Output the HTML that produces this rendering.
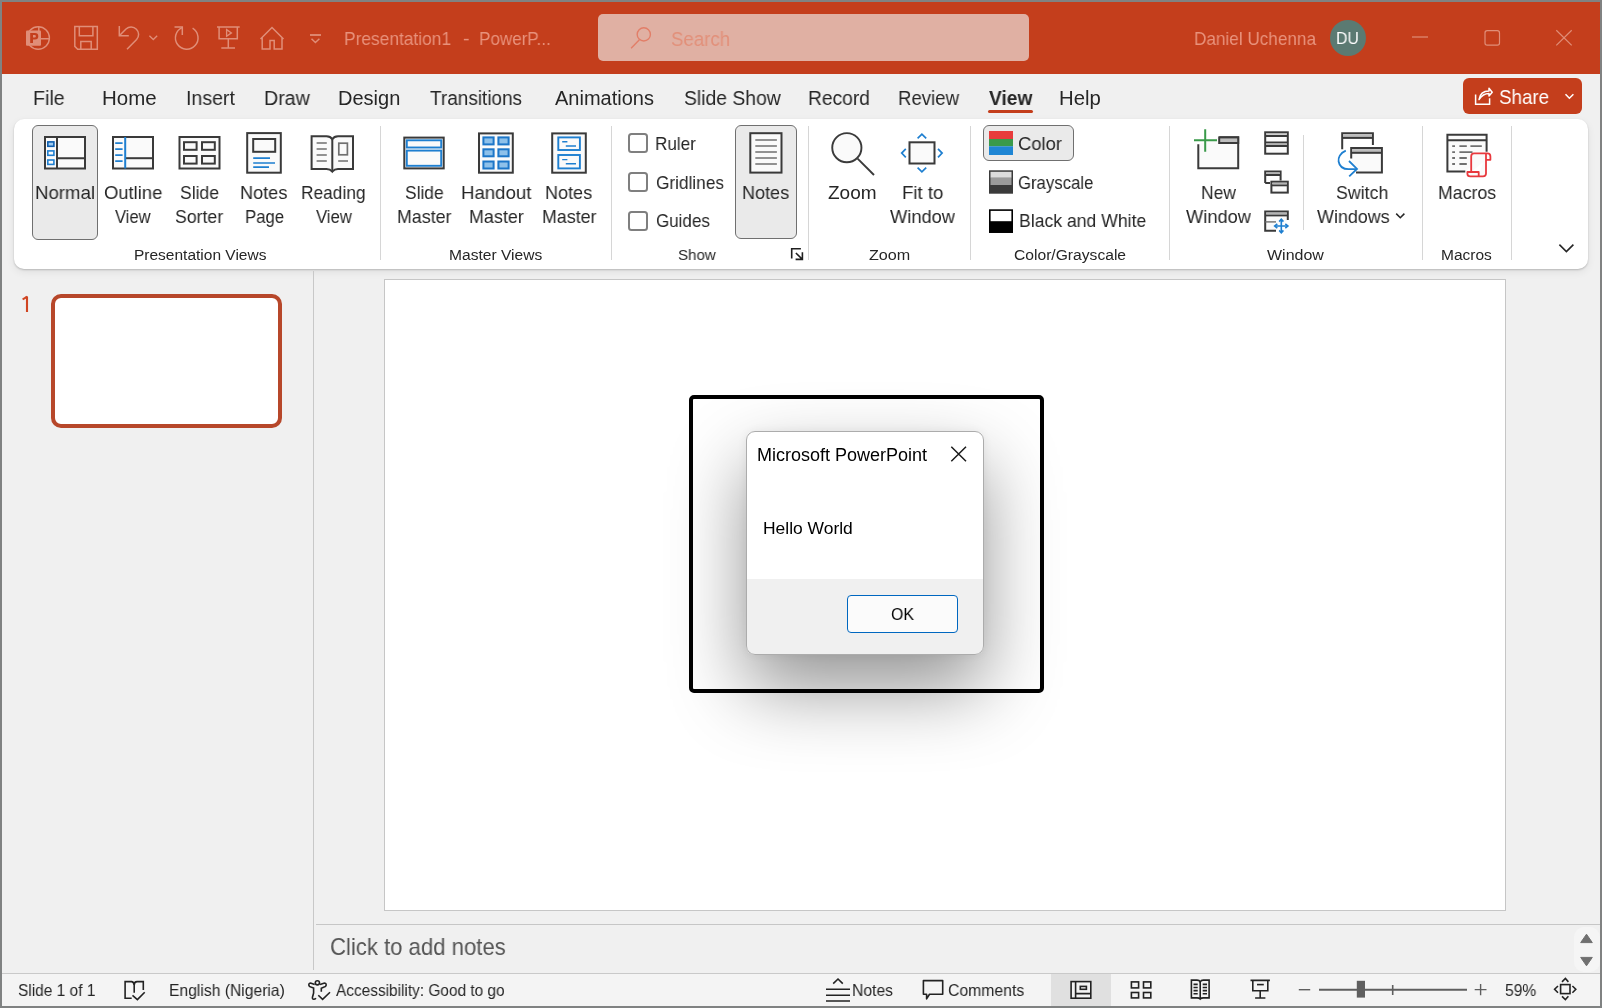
<!DOCTYPE html>
<html><head><meta charset="utf-8"><style>
*{margin:0;padding:0;box-sizing:border-box}
html,body{width:1602px;height:1008px;overflow:hidden;background:#808282;font-family:"Liberation Sans",sans-serif}
.t{position:absolute;line-height:1;white-space:nowrap;transform-origin:0 0;will-change:transform}
.b{position:absolute}
</style></head><body>
<div class="b" style="left:2px;top:2px;width:1598px;height:1004px;background:#f0f0f0"></div>
<div class="b" style="left:2px;top:2px;width:1598px;height:72px;background:#c43e1c"></div>
<div class="b" style="left:598px;top:14px;width:431px;height:47px;background:#e0b0a3;border-radius:5px"></div>
<div class="b" style="left:1463px;top:78px;width:119px;height:36px;background:#c43e1c;border-radius:6px"></div>
<div class="b" style="left:14px;top:119px;width:1574px;height:150px;background:#fff;border-radius:10px;box-shadow:0 1px 2px rgba(0,0,0,.2),0 3px 9px rgba(0,0,0,.07)"></div>
<div class="b" style="left:32px;top:125px;width:66px;height:115px;background:#eaeaea;border:1px solid #707070;border-radius:6px"></div>
<div class="b" style="left:735px;top:125px;width:62px;height:114px;background:#eaeaea;border:1px solid #707070;border-radius:6px"></div>
<div class="b" style="left:983px;top:125px;width:91px;height:36px;background:#eaeaea;border:1px solid #707070;border-radius:6px"></div>
<div class="b" style="left:380px;top:126px;width:1px;height:134px;background:#d6d6d6"></div>
<div class="b" style="left:611px;top:126px;width:1px;height:134px;background:#d6d6d6"></div>
<div class="b" style="left:808px;top:126px;width:1px;height:134px;background:#d6d6d6"></div>
<div class="b" style="left:970px;top:126px;width:1px;height:134px;background:#d6d6d6"></div>
<div class="b" style="left:1169px;top:126px;width:1px;height:134px;background:#d6d6d6"></div>
<div class="b" style="left:1422px;top:126px;width:1px;height:134px;background:#d6d6d6"></div>
<div class="b" style="left:1511px;top:126px;width:1px;height:134px;background:#d6d6d6"></div>
<div class="b" style="left:1303px;top:135px;width:1px;height:95px;background:#d6d6d6"></div>
<div class="b" style="left:628px;top:133px;width:20px;height:20px;border:2px solid #7f7f7f;border-radius:3.5px;background:#fff"></div>
<div class="b" style="left:628px;top:172px;width:20px;height:20px;border:2px solid #7f7f7f;border-radius:3.5px;background:#fff"></div>
<div class="b" style="left:628px;top:211px;width:20px;height:20px;border:2px solid #7f7f7f;border-radius:3.5px;background:#fff"></div>
<div class="b" style="left:313px;top:271px;width:1px;height:699px;background:#c8c8c8"></div>
<div class="b" style="left:51px;top:294px;width:231px;height:134px;background:#fff;border:4px solid #b7472a;border-radius:10px"></div>
<div class="b" style="left:384px;top:279px;width:1122px;height:632px;background:#fff;border:1px solid #c6c6c6"></div>
<div class="b" style="left:316px;top:924px;width:1284px;height:1px;background:#c6c6c6"></div>
<div class="b" style="left:1574px;top:927px;width:26px;height:45px;background:#f5f5f5;border-radius:10px"></div>
<div class="b" style="left:2px;top:973px;width:1598px;height:1px;background:#c9c9c9"></div>
<div class="b" style="left:2px;top:974px;width:1598px;height:32px;background:#f4f4f4"></div>
<div class="b" style="left:1051px;top:974px;width:60px;height:32px;background:#e0e0e0"></div>
<div class="b" style="left:746px;top:431px;width:238px;height:224px;border-radius:9px;box-shadow:0 34px 76px rgba(0,0,0,.42),0 0 10px rgba(0,0,0,.06)"></div>
<div class="b" style="left:689px;top:395px;width:355px;height:298px;border:4px solid #000;border-radius:5px"></div>
<div class="b" style="left:746px;top:431px;width:238px;height:224px;border-radius:9px;background:linear-gradient(#fff 0,#fff 147px,#f0f0f0 147px);border:1.5px solid #acacac"></div>
<div class="b" style="left:847px;top:595px;width:111px;height:38px;border:1px solid #0067c0;border-radius:4px;background:#fbfbfb"></div>
<div class="b" style="left:988px;top:110px;width:45px;height:3px;background:#c43e1c;border-radius:2px"></div>
<div class="b" style="left:1330px;top:20px;width:36px;height:36px;border-radius:50%;background:#5b7a72"></div>
<svg class="b" style="left:0;top:0" width="1602" height="1008" viewBox="0 0 1602 1008">
<g fill="#fafafa" stroke="#3a3a3a" stroke-width="2">
  <!-- Normal -->
  <rect x="45" y="137" width="40" height="31.5"/>
  <path d="M57 137V168.5 M57 158.2H85" fill="none"/>
  <!-- Outline -->
  <rect x="113" y="137" width="40" height="31.5"/>
  <path d="M126 158.2H153" fill="none"/>
  <!-- Sorter -->
  <rect x="179.5" y="137" width="40" height="31.5"/>
  <rect x="184" y="142.2" width="12.6" height="7.6"/>
  <rect x="202" y="142.2" width="12.8" height="7.6"/>
  <rect x="184" y="156" width="12.6" height="7.6"/>
  <rect x="202" y="156" width="12.8" height="7.6"/>
  <!-- Notes Page -->
  <rect x="247.2" y="133.1" width="33.6" height="39.6"/>
  <rect x="253.2" y="139" width="22" height="12.8"/>
  <!-- Reading View -->
  <path d="M311.6 136.2H326.5Q330.5 136.2 332.3 139.2Q334.1 136.2 338 136.2H353V169H338Q334.5 169 332.3 171.6Q330.1 169 326.5 169H311.6Z"/>
  <path d="M332.3 139.2V171" fill="none"/>
  <!-- Slide Master -->
  <rect x="404.3" y="137.6" width="39.4" height="30.8"/>
  <!-- Handout Master -->
  <rect x="479" y="133.4" width="33.8" height="39.3"/>
  <!-- Notes Master -->
  <rect x="552.2" y="133.4" width="33.6" height="39.3"/>
  <!-- Notes button -->
  <rect x="750.3" y="133.2" width="31.2" height="39.4"/>
  <!-- Zoom -->
  <circle cx="846.85" cy="147.7" r="14.6" stroke-width="1.9"/>
  <path d="M857.6 158.7L874 175" fill="none" stroke-width="1.9"/>
  <!-- Fit to window -->
  <rect x="909.5" y="142.3" width="25" height="21.2"/>
</g>
<!-- blue details -->
<g fill="none" stroke="#1e7fd0" stroke-width="1.6">
  <rect x="47.8" y="141.9" width="6.1" height="4.4" fill="#9fcbf0" stroke="#0f5fb0"/>
  <rect x="47.8" y="150.9" width="6.1" height="4.4"/>
  <rect x="47.8" y="160" width="6.1" height="4.4"/>
  <path d="M125.2 137V168.5" stroke-width="2"/>
  <path d="M115.2 143.1H122.6M115.2 149.1H122.6M115.2 155.1H122.6M115.2 161.1H122.6"/>
  <path d="M253.2 158.2H270M253.2 163H275M253.2 167.2H269" stroke-width="1.7"/>
  <rect x="406.8" y="140.3" width="34.4" height="7.2" stroke-width="1.9"/>
  <rect x="406.8" y="150.6" width="34.4" height="15.2" stroke-width="1.9"/>
  <g fill="#8ec1ea" stroke="#1c76c8" stroke-width="2">
    <rect x="483.4" y="137.4" width="10.2" height="7"/>
    <rect x="498.4" y="137.4" width="10.2" height="7"/>
    <rect x="483.4" y="149.3" width="10.2" height="7"/>
    <rect x="498.4" y="149.3" width="10.2" height="7"/>
    <rect x="483.4" y="161.5" width="10.2" height="7"/>
    <rect x="498.4" y="161.5" width="10.2" height="7"/>
  </g>
  <rect x="558.3" y="137.4" width="21.6" height="12.6" stroke-width="1.9"/>
  <rect x="558.3" y="155" width="21.6" height="13.4" stroke-width="1.9"/>
  <path d="M562.2 141.8H567.4M565.8 146H576M562.2 159.6H567.4M565.8 163.8H576" stroke-width="1.4"/>
  <path d="M917.6 138.3L921.9 134.2L926.2 138.3M917.6 167.7L921.9 171.8L926.2 167.7M905.8 148.8L901.7 153.1L905.8 157.4M938 148.8L942.1 153.1L938 157.4" stroke-width="1.7"/>
</g>
<!-- gray lines -->
<g fill="none" stroke="#707070" stroke-width="1.7">
  <path d="M316.6 143H326.8M316.6 149H326.8M316.6 155H326.8M316.6 161H326.8M338.2 161H348"/>
  <rect x="338.8" y="143.2" width="8.6" height="11.6"/>
  <path d="M755.3 140H776.9M755.3 146H776.9M755.3 152H776.9M755.3 158H776.9M755.3 164H776.9"/>
</g>
<!-- color / grayscale / bw -->
<rect x="989" y="131" width="24" height="8" fill="#e83c3c"/>
<rect x="989" y="139" width="24" height="7.3" fill="#3a9a4a"/>
<rect x="989" y="146.3" width="24" height="8.7" fill="#1f86d4"/>
<rect x="989" y="170.3" width="24" height="23.4" fill="#3a3a3a"/>
<rect x="990.5" y="171.8" width="21" height="6" fill="#dcdcdc"/>
<rect x="990.5" y="177.8" width="21" height="7.2" fill="#9a9a9a"/>
<rect x="989.8" y="210.1" width="22.4" height="22" fill="#fff" stroke="#000" stroke-width="1.6"/>
<rect x="989" y="221.2" width="24" height="11.6" fill="#000"/>
<!-- window group -->
<g fill="#fafafa" stroke="#3a3a3a" stroke-width="2">
  <path d="M1198.3 144.3V168.3H1238.2V137.3H1219.2"/>
  <rect x="1219.2" y="137.4" width="19" height="5.6" fill="#bdbdbd"/>
  <!-- arrange all -->
  <rect x="1265.2" y="132.3" width="22.6" height="21.4"/>
  <path d="M1265.2 136H1287.8M1265.2 142.4H1287.8M1265.2 146H1287.8" fill="none"/>
  <path d="M1266 133.8H1287" stroke="#b4b4b4" stroke-width="1.6"/>
  <path d="M1266 144.2H1287" stroke="#b4b4b4" stroke-width="1.6"/>
  <!-- cascade -->
  <path d="M1265.2 183V171.4H1280.6V180.5M1265.2 175H1280.6M1265.2 183H1270" fill="none"/>
  <path d="M1266 173.2H1280" stroke="#b4b4b4" stroke-width="1.6"/>
  <rect x="1271.4" y="181.7" width="16.4" height="10.9"/>
  <path d="M1271.4 185.3H1287.8" fill="none"/>
  <path d="M1272.2 183.5H1287" stroke="#b4b4b4" stroke-width="1.6"/>
  <!-- move split -->
  <path d="M1276 230.7H1265.2V211.6H1287.8V220" fill="#fafafa"/>
  <path d="M1265.2 215.4H1287.8" fill="none"/>
  <path d="M1266 213.5H1287" stroke="#b4b4b4" stroke-width="1.6"/>
  <path d="M1265.2 221.9H1276" fill="none" stroke="#707070" stroke-width="1.4"/>
  <!-- switch windows -->
  <path d="M1342.2 149.2V133.2H1372.9V145.1" fill="none"/>
  <rect x="1343" y="134.2" width="29" height="3.2" fill="#bdbdbd" stroke="none"/>
  <path d="M1342.2 137.9H1372.9" fill="none"/>
  <path d="M1351.2 158.5V148.1H1381.9V172.6H1356" fill="#fafafa"/>
  <rect x="1352" y="149.1" width="29" height="3.2" fill="#bdbdbd" stroke="none"/>
  <path d="M1351.2 152.8H1381.9" fill="none"/>
  <!-- macros -->
  <path d="M1465.3 171.4H1447.4V134.8H1486.6V151.8" fill="#fafafa"/>
  <path d="M1447.4 140.2H1486.6" fill="none"/>
</g>
<path d="M1194 140.2H1217M1205.2 129.3V151.8" stroke="#3a9a4a" stroke-width="2" fill="none"/>
<g fill="none" stroke="#1e7fd0" stroke-width="1.8">
  <path d="M1345.8 150.7C1340 153 1338 158 1338.6 161.5C1339.5 166.5 1343.5 169.2 1348.5 169.2H1357"/>
  <path d="M1349 161L1357 168.9L1349.2 176.3"/>
  <path d="M1281.3 219.6V232.4M1274.9 226H1287.7" stroke-width="1.6"/>
  <path d="M1279.2 221.6L1281.3 219.2L1283.4 221.6M1279.2 230.4L1281.3 232.8L1283.4 230.4M1277.3 223.9L1274.7 226L1277.3 228.1M1285.3 223.9L1287.9 226L1285.3 228.1" stroke-width="1.6"/>
</g>
<g fill="none" stroke="#707070" stroke-width="1.8">
  <path d="M1452.2 146.1H1455M1459.4 146.1H1466.8M1470.4 146.1H1481.8M1452.2 152.1H1455M1459.4 152.1H1472.5M1452.2 158H1455M1459.4 158H1466.8M1452.2 164H1455M1459.4 164H1466.8"/>
</g>
<g fill="#fafafa" stroke="#e8383d" stroke-width="1.8" stroke-linejoin="round">
  <path d="M1471.2 172V156.3Q1471.2 153.4 1474 153.4H1487.5Q1490.4 153.4 1490.4 156.6V159.8H1486"/>
  <path d="M1486 153.8V173.5Q1486 176.3 1483 176.3H1470.2Q1467.4 176.3 1467.4 173.7V172H1478.7V176"/>
</g>
<!-- dialog launcher -->
<g fill="none" stroke="#1f1f1f" stroke-width="1.6">
  <path d="M800.9 248.8H791.7V258.4"/>
  <path d="M795.9 253L802 259 M802.4 252.3V259.4H795.6"/>
</g>
<!-- switch windows chevron + collapse chevron -->
<path d="M1396.2 213.6L1400.3 217.7L1404.4 213.6" fill="none" stroke="#262626" stroke-width="1.5"/>
<path d="M1559.4 244.6L1566.4 251.6L1573.4 244.6" fill="none" stroke="#262626" stroke-width="1.6"/>
<!-- dialog close -->
<path d="M951.3 446.7L966 461.2M966 446.7L951.3 461.2" fill="none" stroke="#1a1a1a" stroke-width="1.5"/>
<!-- scroll arrows -->
<path d="M1586.5 934.2L1592.3 942.6H1580.7Z" fill="#707070" stroke="#707070" stroke-width="1" stroke-linejoin="round"/>
<path d="M1586.5 965.8L1592.3 957.4H1580.7Z" fill="#707070" stroke="#707070" stroke-width="1" stroke-linejoin="round"/>
<g fill="none" stroke="#222" stroke-width="1.6">
  <!-- book check -->
  <path d="M131.7 998.2H125.1V981.6H131.7Q134.2 982.2 134.2 985V992.7"/>
  <path d="M134.2 985Q134.2 981.6 137 981.6H143.3V990"/>
  <path d="M132.5 995.4L137.4 999.6L144.7 992.3"/>
  <!-- accessibility -->
  <circle cx="317.4" cy="982.8" r="2.1"/>
  <path d="M314.7 984.5L311.2 983.2Q309 982.8 308.8 985Q309 986.8 311.5 987.2L313.6 988V993Q313 995.5 312.5 997Q312 999 313.8 999.2Q315 999.2 316 998.2"/>
  <path d="M320 984.5L323.8 983.2Q326 982.8 326.2 985Q326 986.8 323.5 987.2L321.3 988.2V991.8"/>
  <path d="M318.3 995.2L322.6 999.4L330 992.2"/>
  <!-- notes -->
  <path d="M826 989.3H850M826 995.2H850M826 1001H850" />
  <path d="M833.2 983.6L838 979L842.8 983.6"/>
  <!-- comments -->
  <path d="M923.4 980.6H942.7V994.3H929.5L926.6 998.8V994.3H923.4Z" stroke-linejoin="round"/>
  <!-- normal view -->
  <rect x="1071.1" y="981.6" width="19.7" height="16.6" fill="#f2f2f2"/>
  <path d="M1075.6 981.6V998.2M1075.6 993.6H1090.8"/>
  <rect x="1080.3" y="986.4" width="6.1" height="2.9"/>
  <!-- sorter -->
  <rect x="1131.4" y="981.9" width="7.2" height="6"/>
  <rect x="1143.5" y="981.9" width="7.3" height="6"/>
  <rect x="1131.4" y="992.5" width="7.2" height="5.4"/>
  <rect x="1143.5" y="992.5" width="7.3" height="5.4"/>
  <!-- reading -->
  <path d="M1191.4 980.1H1197Q1199.4 980.1 1200.2 982Q1201 980.1 1203.4 980.1H1209.1V997.9H1203.4Q1201 997.9 1200.2 999Q1199.4 997.9 1197 997.9H1191.4Z"/>
  <path d="M1200.2 982V998"/>
  <path d="M1193.5 984.4H1197.7M1193.5 987.5H1197.7M1193.5 990.6H1197.7M1193.5 993.7H1197.7M1202.7 984.4H1207M1202.7 987.5H1207M1202.7 990.6H1207M1202.7 993.7H1207"/>
  <!-- slideshow -->
  <path d="M1250.5 980.4H1269.9M1252.8 980.4V990.8H1267.8V980.4M1260.2 990.8V998M1255.1 998H1265.4"/>
  <path d="M1257 984.6H1263.8"/>
  <!-- fit -->
  <rect x="1560.6" y="984.6" width="9.4" height="9"/>
  <path d="M1562 981.9L1565.4 978.5L1568.4 981.9M1562 996.3L1565.4 999.5L1568.4 996.3M1558 986L1554.6 989.3L1558 992.7M1572.4 986L1575.8 989.3L1572.4 992.7"/>
</g>
<!-- zoom slider -->
<g fill="none" stroke="#5f5f5f">
  <path d="M1298.8 989.7H1310.2" stroke-width="1.4"/>
  <path d="M1319 989.7H1467" stroke-width="2"/>
  <path d="M1392.7 985V995" stroke-width="1.6"/>
  <path d="M1474.7 989.6H1486.5M1480.6 984V995.2" stroke-width="1.4"/>
</g>
<rect x="1356.8" y="980.8" width="8.2" height="16.8" fill="#5f5f5f"/>
<path d="M27 296.4V312" stroke="#d04522" stroke-width="2.1" fill="none"/>
<path d="M22.6 299.4Q25 298.3 27 296.6" stroke="#d04522" stroke-width="2" fill="none"/>
<g fill="none" stroke="#e08e78" stroke-width="1.4">
  <!-- PPT logo -->
  <circle cx="38.2" cy="38" r="11.2"/>
  <path d="M38.8 26.7V31 M41 38.8H49.5"/>
</g>
<rect x="26" y="30.4" width="15" height="15.3" rx="1" fill="#e08e78"/>
<path d="M30.2 43V33H35A3.3 3.3 0 0 1 35 39.6H33V43Z M33 35V37.6H34.6A1.3 1.3 0 0 0 34.6 35Z" fill="#c43e1c" fill-rule="evenodd"/>
<g fill="none" stroke="#e08e78" stroke-width="1.5">
  <!-- save -->
  <path d="M74.8 26.6H97.3V49.3H77.7L74.8 46.4Z"/>
  <path d="M79.3 26.6V35.7H92.9V26.6"/>
  <path d="M80.8 49.3V41.6H91.2V49.3"/>
  <!-- undo -->
  <path d="M119.3 26V35.7H128.8"/>
  <path d="M119.8 35.2L126 29A7.5 7.5 0 0 1 136.6 39.6L127 49.3"/>
  <!-- redo -->
  <path d="M192.6 28.2A11.3 11.3 0 1 1 182 27.6"/>
  <path d="M174.5 27H182.3V35"/>
  <!-- presenter -->
  <path d="M217 26.9H239.7 M219.1 26.9V38.7H237.3V26.9 M228.3 38.7V48 M221.3 48H235"/>
  <path d="M226.6 29.6V36.2L231.4 32.9Z" stroke-width="1.3"/>
  <!-- home -->
  <path d="M260.5 39L272 27.5L283.5 39 M262.2 37.5V49H270V40.4H274.2V49H282V37.5"/>
  <!-- customize -->
  <path d="M310 35H321" stroke-width="1.8"/>
  <path d="M311.5 38.8L315.4 42.5L319.4 38.8"/>
  <!-- undo dropdown -->
  <path d="M149.4 35.8L153.3 39.5L157.2 35.8" stroke-width="1.3"/>
  <!-- window controls -->
  <path d="M1412 37H1428" stroke-width="1.2"/>
  <rect x="1485" y="30.7" width="14.5" height="14.5" rx="2.2" stroke-width="1.2"/>
  <path d="M1556.3 30.3L1571.7 45.4M1571.7 30.3L1556.3 45.4" stroke-width="1.2"/>
</g>
<g fill="none" stroke="#e27e68" stroke-width="1.4">
  <circle cx="643.8" cy="34.4" r="6.6"/>
  <path d="M639.4 39.8L631.1 48.2"/>
</g>
<!-- share icon -->
<g fill="none" stroke="#fff" stroke-width="1.5">
  <path d="M1475.6 94.5V104.2H1489.6V98.2"/>
  <path d="M1479 99.5C1480 93 1484 91 1489 91V88.2L1492.2 92.2L1489 96V93.4C1485 93.4 1482 94.8 1479 99.5Z" stroke-linejoin="round"/>
  <path d="M1565.5 94.2L1569.4 98.2L1573.4 94.2" stroke-width="1.5"/>
</g>

</svg>
<div class="t" style="left:344.31px;top:28.85px;font-size:19px;color:#e8927c;transform:scaleX(0.9133);">Presentation1</div>
<div class="t" style="left:462.92px;top:28.85px;font-size:19px;color:#e8927c;transform:scaleX(1.0311);">-</div>
<div class="t" style="left:479.23px;top:28.85px;font-size:19px;color:#e8927c;transform:scaleX(0.8987);">PowerP...</div>
<div class="t" style="left:671.16px;top:29.00px;font-size:20px;color:#e2907a;transform:scaleX(0.9329);">Search</div>
<div class="t" style="left:1193.63px;top:28.85px;font-size:19px;color:#e8927c;transform:scaleX(0.9023);">Daniel Uchenna</div>
<div class="t" style="left:1336.44px;top:29.98px;font-size:16.5px;color:#ffffff;transform:scaleX(0.9574);">DU</div>
<div class="t" style="left:1498.75px;top:86.15px;font-size:21px;color:#ffffff;transform:scaleX(0.8951);">Share</div>
<div class="t" style="left:32.93px;top:88.00px;font-size:20px;color:#262626;transform:scaleX(0.9832);">File</div>
<div class="t" style="left:102.06px;top:88.00px;font-size:20px;color:#262626;transform:scaleX(1.0236);">Home</div>
<div class="t" style="left:185.74px;top:88.00px;font-size:20px;color:#262626;transform:scaleX(0.9771);">Insert</div>
<div class="t" style="left:264.13px;top:88.00px;font-size:20px;color:#262626;transform:scaleX(0.9823);">Draw</div>
<div class="t" style="left:338.41px;top:88.00px;font-size:20px;color:#262626;transform:scaleX(0.9949);">Design</div>
<div class="t" style="left:430.32px;top:88.00px;font-size:20px;color:#262626;transform:scaleX(0.9479);">Transitions</div>
<div class="t" style="left:554.50px;top:88.00px;font-size:20px;color:#262626;">Animations</div>
<div class="t" style="left:683.63px;top:88.00px;font-size:20px;color:#262626;transform:scaleX(0.9677);">Slide Show</div>
<div class="t" style="left:807.96px;top:88.00px;font-size:20px;color:#262626;transform:scaleX(0.9610);">Record</div>
<div class="t" style="left:898.01px;top:88.00px;font-size:20px;color:#262626;transform:scaleX(0.9297);">Review</div>
<div class="t" style="left:1059.08px;top:88.00px;font-size:20px;color:#262626;transform:scaleX(1.0155);">Help</div>
<div class="t" style="left:988.60px;top:88.00px;font-size:20px;color:#262626;font-weight:bold;transform:scaleX(0.9580);">View</div>
<div class="t" style="left:34.71px;top:182.85px;font-size:19px;color:#262626;transform:scaleX(0.9807);">Normal</div>
<div class="t" style="left:103.77px;top:182.85px;font-size:19px;color:#262626;transform:scaleX(0.9688);">Outline</div>
<div class="t" style="left:114.92px;top:206.85px;font-size:19px;color:#262626;transform:scaleX(0.8735);">View</div>
<div class="t" style="left:179.81px;top:182.85px;font-size:19px;color:#262626;transform:scaleX(0.9220);">Slide</div>
<div class="t" style="left:175.20px;top:206.85px;font-size:19px;color:#262626;transform:scaleX(0.9300);">Sorter</div>
<div class="t" style="left:239.55px;top:182.85px;font-size:19px;color:#262626;transform:scaleX(0.9535);">Notes</div>
<div class="t" style="left:244.66px;top:206.85px;font-size:19px;color:#262626;transform:scaleX(0.8812);">Page</div>
<div class="t" style="left:300.61px;top:182.85px;font-size:19px;color:#262626;transform:scaleX(0.9115);">Reading</div>
<div class="t" style="left:315.92px;top:206.85px;font-size:19px;color:#262626;transform:scaleX(0.8809);">View</div>
<div class="t" style="left:405.02px;top:182.85px;font-size:19px;color:#262626;transform:scaleX(0.9146);">Slide</div>
<div class="t" style="left:396.88px;top:206.85px;font-size:19px;color:#262626;transform:scaleX(0.9371);">Master</div>
<div class="t" style="left:460.71px;top:182.85px;font-size:19px;color:#262626;transform:scaleX(0.9800);">Handout</div>
<div class="t" style="left:468.87px;top:206.85px;font-size:19px;color:#262626;transform:scaleX(0.9424);">Master</div>
<div class="t" style="left:544.76px;top:182.85px;font-size:19px;color:#262626;transform:scaleX(0.9493);">Notes</div>
<div class="t" style="left:541.98px;top:206.85px;font-size:19px;color:#262626;transform:scaleX(0.9371);">Master</div>
<div class="t" style="left:741.56px;top:182.85px;font-size:19px;color:#262626;transform:scaleX(0.9493);">Notes</div>
<div class="t" style="left:827.63px;top:182.85px;font-size:19px;color:#262626;transform:scaleX(0.9928);">Zoom</div>
<div class="t" style="left:901.51px;top:182.85px;font-size:19px;color:#262626;transform:scaleX(0.9774);">Fit to</div>
<div class="t" style="left:889.51px;top:206.85px;font-size:19px;color:#262626;transform:scaleX(0.9623);">Window</div>
<div class="t" style="left:1200.60px;top:182.85px;font-size:19px;color:#262626;transform:scaleX(0.9214);">New</div>
<div class="t" style="left:1185.61px;top:206.85px;font-size:19px;color:#262626;transform:scaleX(0.9623);">Window</div>
<div class="t" style="left:1335.60px;top:182.85px;font-size:19px;color:#262626;transform:scaleX(0.9338);">Switch</div>
<div class="t" style="left:1316.91px;top:206.85px;font-size:19px;color:#262626;transform:scaleX(0.9438);">Windows</div>
<div class="t" style="left:1437.58px;top:182.85px;font-size:19px;color:#262626;transform:scaleX(0.9329);">Macros</div>
<div class="t" style="left:655.43px;top:134.05px;font-size:19px;color:#262626;transform:scaleX(0.9009);">Ruler</div>
<div class="t" style="left:655.94px;top:172.60px;font-size:19px;color:#262626;transform:scaleX(0.9067);">Gridlines</div>
<div class="t" style="left:655.95px;top:211.25px;font-size:19px;color:#262626;transform:scaleX(0.8940);">Guides</div>
<div class="t" style="left:1018.38px;top:134.05px;font-size:19px;color:#262626;transform:scaleX(0.9687);">Color</div>
<div class="t" style="left:1018.46px;top:172.60px;font-size:19px;color:#262626;transform:scaleX(0.8806);">Grayscale</div>
<div class="t" style="left:1018.59px;top:211.25px;font-size:19px;color:#262626;transform:scaleX(0.9266);">Black and White</div>
<div class="t" style="left:133.56px;top:247.43px;font-size:15.5px;color:#262626;">Presentation Views</div>
<div class="t" style="left:448.75px;top:247.43px;font-size:15.5px;color:#262626;transform:scaleX(1.0057);">Master Views</div>
<div class="t" style="left:678.02px;top:247.43px;font-size:15.5px;color:#262626;transform:scaleX(0.9756);">Show</div>
<div class="t" style="left:868.72px;top:247.43px;font-size:15.5px;color:#262626;transform:scaleX(1.0417);">Zoom</div>
<div class="t" style="left:1013.62px;top:247.43px;font-size:15.5px;color:#262626;transform:scaleX(1.0085);">Color/Grayscale</div>
<div class="t" style="left:1267.32px;top:247.43px;font-size:15.5px;color:#262626;transform:scaleX(1.0308);">Window</div>
<div class="t" style="left:1440.76px;top:247.43px;font-size:15.5px;color:#262626;">Macros</div>
<div class="t" style="left:329.89px;top:934.70px;font-size:24px;color:#555555;transform:scaleX(0.9213);">Click to add notes</div>
<div class="t" style="left:17.70px;top:981.98px;font-size:16.5px;color:#262626;transform:scaleX(0.9369);">Slide 1 of 1</div>
<div class="t" style="left:169.45px;top:981.98px;font-size:16.5px;color:#262626;transform:scaleX(0.9496);">English (Nigeria)</div>
<div class="t" style="left:335.60px;top:981.98px;font-size:16.5px;color:#262626;transform:scaleX(0.9333);">Accessibility: Good to go</div>
<div class="t" style="left:852.44px;top:981.98px;font-size:16.5px;color:#262626;transform:scaleX(0.9522);">Notes</div>
<div class="t" style="left:947.51px;top:981.98px;font-size:16.5px;color:#262626;transform:scaleX(0.9557);">Comments</div>
<div class="t" style="left:1504.97px;top:981.98px;font-size:16.5px;color:#262626;transform:scaleX(0.9477);">59%</div>
<div class="t" style="left:757.26px;top:445.50px;font-size:18px;color:#000000;">Microsoft PowerPoint</div>
<div class="t" style="left:762.60px;top:520.15px;font-size:17px;color:#000000;transform:scaleX(1.0260);">Hello World</div>
<div class="t" style="left:890.98px;top:605.95px;font-size:17px;color:#000000;transform:scaleX(0.9353);">OK</div>
</body></html>
